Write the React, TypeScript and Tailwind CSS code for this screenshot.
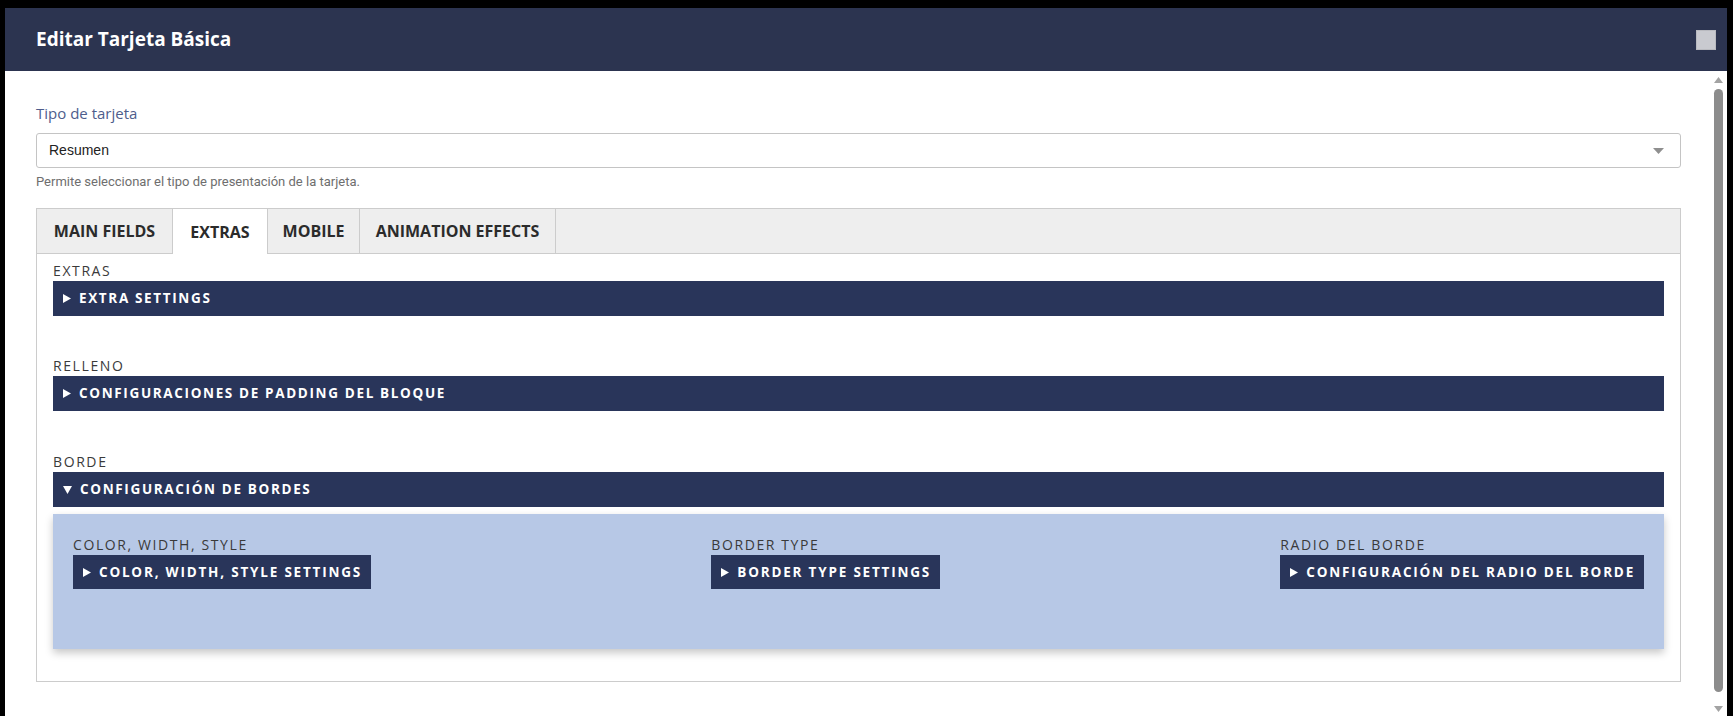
import React from "react";

const sans = "font-['Open_Sans',sans-serif]";

function Caret({ down = false }: { down?: boolean }) {
  if (down) {
    return (
      <svg width="9" height="8" viewBox="0 0 9 8" className="shrink-0">
        <polygon points="0,0 9,0 4.5,8" fill="#ffffff" />
      </svg>
    );
  }
  return (
    <svg width="8" height="9" viewBox="0 0 8 9" className="shrink-0">
      <polygon points="0,0 8,4.5 0,9" fill="#ffffff" />
    </svg>
  );
}

function AccordionBar({ title, open = false }: { title: string; open?: boolean }) {
  return (
    <div className="flex h-[35px] items-center gap-[8px] bg-[#29355a] pl-[10px]">
      <Caret down={open} />
      <span className={`${sans} text-[13.5px] font-bold uppercase tracking-[1.65px] text-white`}>{title}</span>
    </div>
  );
}

function SmallToggle({ title }: { title: string }) {
  return (
    <div className="inline-flex h-[34px] items-center gap-[8px] bg-[#29355a] pl-[10px] pr-[9px]">
      <Caret />
      <span className={`${sans} text-[13.5px] font-bold uppercase tracking-[1.8px] text-white`}>{title}</span>
    </div>
  );
}

function FieldLabel({ children }: { children: React.ReactNode }) {
  return (
    <div className={`${sans} mb-px text-[14px] leading-[18px] uppercase tracking-[1.6px] text-[#3a3a3a]`}>
      {children}
    </div>
  );
}

const tabs = [
  { label: "MAIN FIELDS", w: "w-[136px]" },
  { label: "EXTRAS", w: "w-[95px]" },
  { label: "MOBILE", w: "w-[92px]" },
  { label: "ANIMATION EFFECTS", w: "w-[196px]" },
];

export default function App() {
  return (
    <div className="h-[716px] w-[1733px] overflow-hidden bg-black pl-[5px] pr-[6px] pt-[8px]">
      <div className="flex h-full flex-col bg-white">
        {/* header */}
        <div className="flex h-[63px] shrink-0 items-center justify-between bg-[#2c3450] pl-[31px] pr-[11px]">
          <h1 className={`${sans} text-[19px] font-bold text-white`}>Editar Tarjeta Básica</h1>
          <div className="h-[20px] w-[20px] border border-[#b9bac0] bg-[#c9cad0]" />
        </div>

        <div className="flex min-h-0 flex-1">
          {/* content */}
          <div className="flex-1 pl-[31px] pr-[32px] pt-[32px]">
            <label className={`${sans} block text-[15px] leading-[20px] text-[#4e5d8c]`}>Tipo de tarjeta</label>
            <div className="mt-[10px] flex h-[35px] items-center justify-between rounded-[3px] border border-[#c4c4c4] pl-[12px] pr-[16px]">
              <span className="font-['Liberation_Sans',Arial,sans-serif] text-[14px] text-[#222]">Resumen</span>
              <svg width="11" height="6" viewBox="0 0 11 6">
                <polygon points="0,0 11,0 5.5,6" fill="#8f8f8f" />
              </svg>
            </div>
            <p className="mt-[6px] font-['Roboto',sans-serif] text-[13px] leading-[16px] text-[#6e6e6e]">
              Permite seleccionar el tipo de presentación de la tarjeta.
            </p>

            {/* tabs */}
            <div className="mt-[18px] border border-[#cccccc]">
              <div className="flex h-[45px] border-b border-[#cccccc] bg-[#eeeeee]">
                {tabs.map((t) => {
                  const active = t.label === "EXTRAS";
                  return (
                    <div
                      key={t.label}
                      className={`${t.w} ${sans} flex items-center justify-center border-r border-[#cccccc] text-[16px] font-bold text-[#2b2b2b] ${
                        active ? "-mb-px bg-white" : ""
                      }`}
                    >
                      {t.label}
                    </div>
                  );
                })}
              </div>

              <div className="px-[16px] pb-[32px] pt-[8px]">
                <FieldLabel>Extras</FieldLabel>
                <AccordionBar title="Extra settings" />

                <div className="mt-[41px]">
                  <FieldLabel>Relleno</FieldLabel>
                  <AccordionBar title="Configuraciones de padding del bloque" />
                </div>

                <div className="mt-[42px]">
                  <FieldLabel>Borde</FieldLabel>
                  <AccordionBar title="Configuración de bordes" open />
                  <div className="mt-[7px] flex justify-between bg-[#b7c8e6] px-[20px] pb-[60px] pt-[22px] shadow-[0_4px_8px_rgba(0,0,0,0.22)]">
                    <div>
                      <FieldLabel>Color, width, style</FieldLabel>
                      <div className="mt-px">
                        <SmallToggle title="Color, width, style settings" />
                      </div>
                    </div>
                    <div>
                      <FieldLabel>Border type</FieldLabel>
                      <div className="mt-px">
                        <SmallToggle title="Border type settings" />
                      </div>
                    </div>
                    <div>
                      <FieldLabel>Radio del borde</FieldLabel>
                      <div className="mt-px">
                        <SmallToggle title="Configuración del radio del borde" />
                      </div>
                    </div>
                  </div>
                </div>
              </div>
            </div>
          </div>

          {/* scrollbar */}
          <div className="flex w-[14px] shrink-0 flex-col items-start pl-[1px] pt-[6px]">
            <svg width="9" height="6" viewBox="0 0 9 6">
              <polygon points="4.5,0 9,6 0,6" fill="#a3a3a3" />
            </svg>
            <div className="mt-[6px] h-[603px] w-[9px] rounded-full bg-[#8c8c8c]" />
            <svg width="9" height="6" viewBox="0 0 9 6" className="mt-[14px]">
              <polygon points="0,0 9,0 4.5,6" fill="#a3a3a3" />
            </svg>
          </div>
        </div>
      </div>
    </div>
  );
}
